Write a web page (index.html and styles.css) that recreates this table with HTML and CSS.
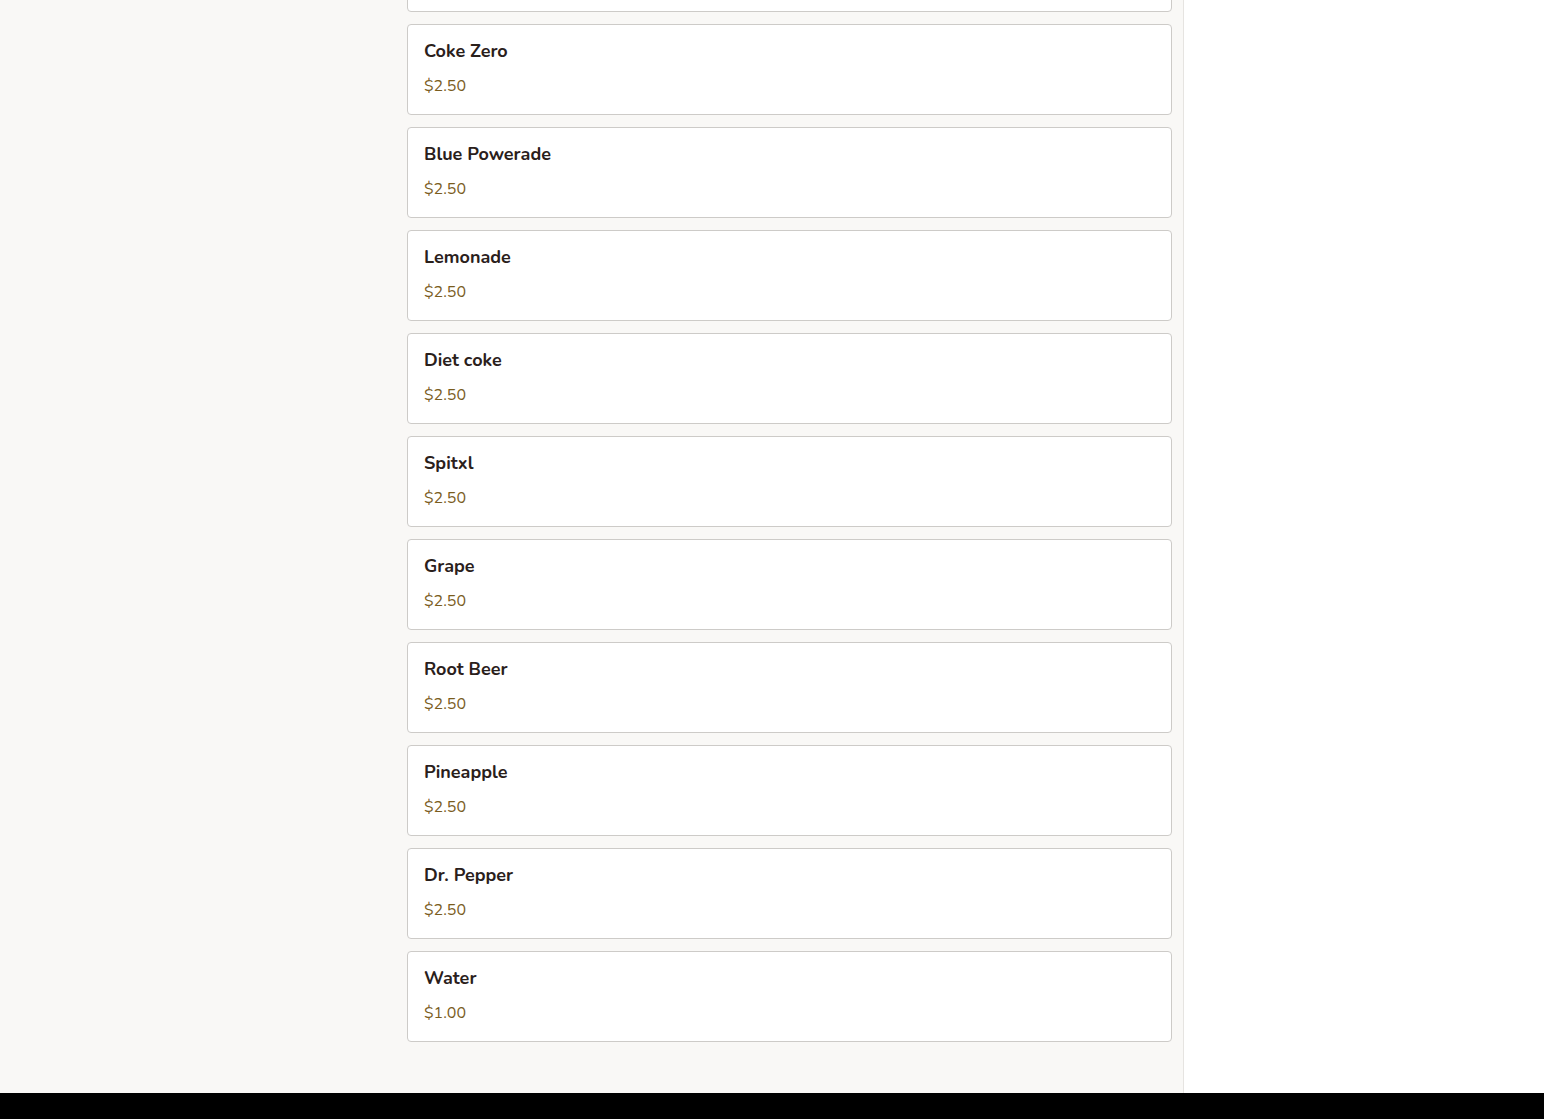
FILE: index.html
```html
<!DOCTYPE html>
<html>
<head>
<meta charset="utf-8">
<link rel="stylesheet" href="styles.css">
</head>
<body>
<div class="page">
  <main class="main">
    <div class="list">
      <div class="card"></div>
      <div class="card"><div class="name">Coke Zero</div><div class="price">$2.50</div></div>
      <div class="card"><div class="name">Blue Powerade</div><div class="price">$2.50</div></div>
      <div class="card"><div class="name">Lemonade</div><div class="price">$2.50</div></div>
      <div class="card"><div class="name">Diet coke</div><div class="price">$2.50</div></div>
      <div class="card"><div class="name">Spitxl</div><div class="price">$2.50</div></div>
      <div class="card"><div class="name">Grape</div><div class="price">$2.50</div></div>
      <div class="card"><div class="name">Root Beer</div><div class="price">$2.50</div></div>
      <div class="card"><div class="name">Pineapple</div><div class="price">$2.50</div></div>
      <div class="card"><div class="name">Dr. Pepper</div><div class="price">$2.50</div></div>
      <div class="card"><div class="name">Water</div><div class="price">$1.00</div></div>
    </div>
  </main>
  <aside class="side"></aside>
</div>
<footer class="footer"></footer>
</body>
</html>
```
FILE: styles.css
```css
html, body {
  margin: 0;
  padding: 0;
  background: #ffffff;
  font-family: "Nunito", "Lato", "Noto Sans", sans-serif;
  overflow: hidden;
}
.page {
  display: flex;
  height: 1093px;
  overflow: hidden;
}
.main {
  width: 1184px;
  background: #f9f8f6;
  border-right: 1px solid #e6e4e1;
  padding: 0 11px 0 407px;
  box-sizing: border-box;
}
.side {
  flex: 1;
  background: #ffffff;
}
.list {
  display: flex;
  flex-direction: column;
  gap: 12px;
  margin-top: -79px;
}
.card {
  background: #ffffff;
  border: 1px solid #cdcbc8;
  border-radius: 4px;
  padding: 16px;
  height: 91px;
  box-sizing: border-box;
}
.name {
  font-size: 18px;
  font-weight: 700;
  color: #2a201b;
  line-height: 20px;
}
.price {
  margin-top: 13px;
  font-size: 16px;
  line-height: 24px;
  color: #7a5c1e;
}
.footer {
  height: 26px;
  background: #000000;
}
```
